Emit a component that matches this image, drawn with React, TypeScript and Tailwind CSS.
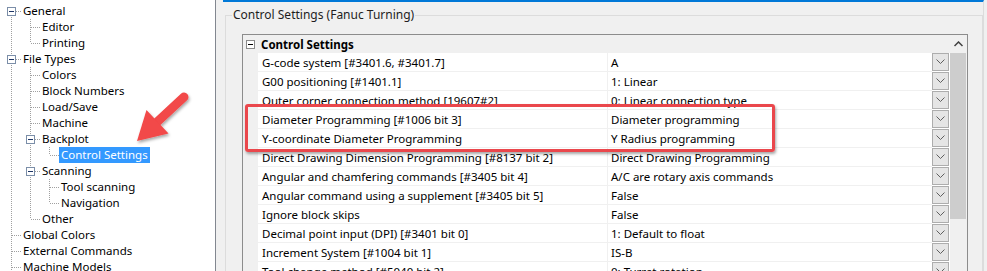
import React from 'react'

type Guide = 'pipe' | 'none' | 'tee' | 'ell' | 'first'

const treeItems: Array<{ label: string; guides: Guide[]; box?: boolean; selected?: boolean }> = [
  { label: 'General', guides: ['first'], box: true },
  { label: 'Editor', guides: ['pipe', 'tee'] },
  { label: 'Printing', guides: ['pipe', 'ell'] },
  { label: 'File Types', guides: ['tee'], box: true },
  { label: 'Colors', guides: ['pipe', 'tee'] },
  { label: 'Block Numbers', guides: ['pipe', 'tee'] },
  { label: 'Load/Save', guides: ['pipe', 'tee'] },
  { label: 'Machine', guides: ['pipe', 'tee'] },
  { label: 'Backplot', guides: ['pipe', 'tee'], box: true },
  { label: 'Control Settings', guides: ['pipe', 'pipe', 'ell'], selected: true },
  { label: 'Scanning', guides: ['pipe', 'tee'], box: true },
  { label: 'Tool scanning', guides: ['pipe', 'pipe', 'tee'] },
  { label: 'Navigation', guides: ['pipe', 'pipe', 'ell'] },
  { label: 'Other', guides: ['pipe', 'ell'] },
  { label: 'Global Colors', guides: ['tee'] },
  { label: 'External Commands', guides: ['tee'] },
  { label: 'Machine Models', guides: ['tee'] },
]

const settings: Array<[string, string]> = [
  ['G-code system [#3401.6, #3401.7]', 'A'],
  ['G00 positioning [#1401.1]', '1: Linear'],
  ['Outer corner connection method [19607#2]', '0: Linear connection type'],
  ['Diameter Programming [#1006 bit 3]', 'Diameter programming'],
  ['Y-coordinate Diameter Programming', 'Y Radius programming'],
  ['Direct Drawing Dimension Programming [#8137 bit 2]', 'Direct Drawing Programming'],
  ['Angular and chamfering commands [#3405 bit 4]', 'A/C are rotary axis commands'],
  ['Angular command using a supplement [#3405 bit 5]', 'False'],
  ['Ignore block skips', 'False'],
  ['Decimal point input (DPI) [#3401 bit 0]', '1: Default to float'],
  ['Increment System [#1004 bit 1]', 'IS-B'],
  ['Tool change method [#5040 bit 2]', '0: Turret rotation'],
]

const TreeGuide = ({ kind, last, box }: { kind: Guide; last: boolean; box?: boolean }) => (
  <svg width="19" height="16" className="shrink-0" shapeRendering="crispEdges">
    <g stroke="#a0a0a0" strokeDasharray="1 1" strokeWidth="1">
      {(kind === 'pipe' || kind === 'tee') && <line x1="9.5" y1="0" x2="9.5" y2="16" />}
      {kind === 'ell' && <line x1="9.5" y1="0" x2="9.5" y2="8" />}
      {kind === 'first' && <line x1="9.5" y1="8" x2="9.5" y2="16" />}
      {last && kind !== 'pipe' && kind !== 'none' && <line x1="10" y1="8.5" x2="19" y2="8.5" />}
    </g>
    {box && (
      <g>
        <rect x="5.5" y="4.5" width="8" height="8" fill="#fff" stroke="#7b8ea8" />
        <line x1="7" y1="8.5" x2="12" y2="8.5" stroke="#1d3566" />
      </g>
    )}
  </svg>
)

const Chevron = () => (
  <svg width="9" height="6" viewBox="0 0 9 6">
    <path d="M0.5 0.5 L4.5 4.5 L8.5 0.5" fill="none" stroke="#5f5f5f" strokeWidth="1" />
  </svg>
)

const TreePanel = () => (
  <div className="w-[216px] shrink-0 border-r border-[#828790] bg-white pt-[3px] pl-[2px] text-[11.5px] leading-[16px] text-black">
    {treeItems.map((item) => (
      <div key={item.label} className="flex h-[16px] items-center">
        {item.guides.map((g, i) => (
          <TreeGuide
            key={i}
            kind={g}
            last={i === item.guides.length - 1}
            box={i === item.guides.length - 1 && item.box}
          />
        ))}
        <span
          className={
            item.selected
              ? 'h-[16px] bg-[#3399ff] px-[2px] text-white'
              : 'h-[16px] px-[2px]'
          }
        >
          {item.label}
        </span>
      </div>
    ))}
  </div>
)

const SettingRow = ({ name, value }: { name: string; value: string }) => (
  <div className="flex h-[19px]">
    <div className="w-[15px] shrink-0 bg-[#f0f0f0]" />
    <div className="w-[350px] shrink-0 truncate border-r border-b border-[#f0f0f0] bg-white pt-[2px] pl-[4px] leading-[16px]">
      {name}
    </div>
    <div className="flex flex-1 bg-white">
      <div className="flex-1 truncate border-b border-[#f0f0f0] pt-[2px] pl-[3px] leading-[16px]">{value}</div>
      <div className="mr-[1px] flex h-[18px] w-[17px] shrink-0 items-center justify-center border border-[#adadad] bg-[#e5e5e5]">
        <Chevron />
      </div>
    </div>
  </div>
)

const PropertyGrid = () => (
  <div className="mt-[11px] mr-[14px] ml-[16px] flex border border-[#8c8c8c] bg-[#f0f0f0] text-[11.5px] text-black">
    <div className="flex-1">
      <div className="flex h-[18px] items-center bg-[#f0f0f0] pt-[1px]">
        <div className="ml-[3px] flex h-[9px] w-[9px] items-center justify-center border border-[#8a8a8a] bg-white">
          <div className="h-px w-[5px] bg-black" />
        </div>
        <span className="ml-[6px] font-bold">Control Settings</span>
      </div>
      {settings.map(([n, v]) => (
        <SettingRow key={n} name={n} value={v} />
      ))}
    </div>
    <div className="w-[17px] shrink-0 bg-[#f0f0f0]">
      <div className="flex h-[18px] w-[16px] items-center justify-center">
        <svg width="9" height="6" viewBox="0 0 9 6">
          <path d="M0.5 5 L4.5 1 L8.5 5" fill="none" stroke="#404040" strokeWidth="1.5" />
        </svg>
      </div>
      <div className="h-[166px] w-[16px] bg-[#cdcdcd]" />
    </div>
  </div>
)

export default function App() {
  return (
    <div
      className="relative flex h-[271px] w-[987px] overflow-hidden bg-[#f0f0f0] text-[12px]"
      style={{ fontFamily: '"Noto Sans", "Open Sans", sans-serif' }}
    >
      <TreePanel />
      <div className="flex flex-1 pl-[7px] pr-[3px]">
        <div className="flex-1 border-t-2 border-r border-t-[#0078d7] border-r-[#dcdcdc] pt-[5px] pl-[2px]">
          <fieldset className="h-[400px] border border-[#dcdcdc]">
            <legend className="ml-[6px] px-[1px] leading-[16px] text-[#1e1e1e]">
              Control Settings (Fanuc Turning)
            </legend>
            <PropertyGrid />
          </fieldset>
        </div>
      </div>

      {/* annotations */}
      <div className="absolute top-[104px] left-[245px] h-[48px] w-[530px] rounded-[3px] border-[3px] border-[#ea474c] shadow-[1px_2px_3px_rgba(0,0,0,0.35)]" />
      <svg className="pointer-events-none absolute top-0 left-0" width="987" height="271">
        <defs>
          <filter id="sh" x="-20%" y="-20%" width="140%" height="140%">
            <feDropShadow dx="1" dy="2" stdDeviation="1.5" floodColor="#000" floodOpacity="0.35" />
          </filter>
        </defs>
        <g filter="url(#sh)" fill="#f24848">
          <line x1="184" y1="97" x2="156" y2="123" stroke="#f24848" strokeWidth="9" strokeLinecap="round" />
          <polygon points="137,141 146.5,110 168.5,133.5" />
        </g>
      </svg>
    </div>
  )
}
